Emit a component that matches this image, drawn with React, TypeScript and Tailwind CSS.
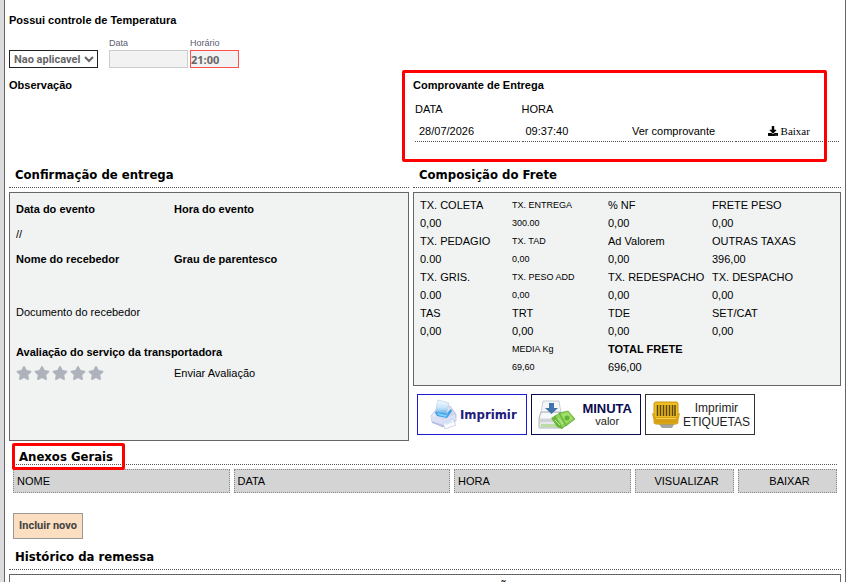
import { FaDownload, FaStar } from 'react-icons/fa';

const FREIGHT_ROWS = [
  ['TX. COLETA', 'TX. ENTREGA', '% NF', 'FRETE PESO'],
  ['0,00', '300.00', '0,00', '0,00'],
  ['TX. PEDAGIO', 'TX. TAD', 'Ad Valorem', 'OUTRAS TAXAS'],
  ['0.00', '0,00', '0,00', '396,00'],
  ['TX. GRIS.', 'TX. PESO ADD', 'TX. REDESPACHO', 'TX. DESPACHO'],
  ['0.00', '0,00', '0,00', '0,00'],
  ['TAS', 'TRT', 'TDE', 'SET/CAT'],
  ['0,00', '0,00', '0,00', '0,00'],
  ['', 'MEDIA Kg', 'TOTAL FRETE', ''],
  ['', '69,60', '696,00', ''],
];

function SectionTitle({ children }: { children: string }) {
  return (
    <h2 className="border-b border-dotted border-[#555] pb-px pl-1.5 font-['DejaVu_Sans_Condensed','DejaVu_Sans',sans-serif] text-[13px] leading-[22px] font-bold">
      {children}
    </h2>
  );
}

function PrinterIcon() {
  return (
    <svg viewBox="0 0 28 32" className="h-8 w-7">
      <defs>
        <linearGradient id="printer" x1="0" y1="0" x2="1" y2="1">
          <stop offset="0" stopColor="#fafbff" />
          <stop offset="1" stopColor="#b4bce0" />
        </linearGradient>
        <linearGradient id="paper" x1="0" y1="0" x2="0" y2="1">
          <stop offset="0" stopColor="#f8fbff" />
          <stop offset=".5" stopColor="#c5e4fa" />
          <stop offset="1" stopColor="#2f94df" />
        </linearGradient>
      </defs>
      <path d="M1 17l4-5 15-5 6 8v7l-13 6L2 23z" fill="url(#printer)" stroke="#a4acd2" strokeWidth=".6" />
      <path d="M8 1l11 3-3 12-8 1-3-3z" fill="url(#paper)" stroke="#b5c7e5" strokeWidth=".6" />
      <path d="M5 13l11 2 5-5 1 2-5 7-10-2z" fill="#3a9ce4" />
      <path d="M7 14l9 2 3-3-3 5-8-2z" fill="#86d2fa" />
      <path d="M1 17l12 4 12-6 1 7-13 5-11-4z" fill="#dce1f5" />
      <path d="M2 22l11 4 12-5v2l-12 5-11-4z" fill="#b8bfe2" />
      <path d="M13 24l10-4 3 6-11 4z" fill="#fbfcff" stroke="#b5bedf" strokeWidth=".6" />
      <path d="M14 24l7-3 2 2-7 3z" fill="#d5e5f8" />
    </svg>
  );
}

function MoneyPrinterIcon() {
  return (
    <svg viewBox="0 0 38 30" className="h-[30px] w-[38px]">
      <path d="M6 1h16l2 12H4z" fill="#f4f6f7" stroke="#c8ced2" />
      <path d="M4 12h19l3 6v9q0 1-1 1H3q-1 0-1-1v-9z" fill="#e6e9eb" stroke="#b0b6ba" />
      <path d="M5 13h17l3 5H3z" fill="#f8f9fa" />
      <path d="M3 19h22v3H3z" fill="#cfd3d6" />
      <path d="M4 24h18v3H4z" fill="#b9dca0" />
      <path d="M12 3h5v5h4l-6.500 6L8 8h4z" fill="#4373ad" />
      <path d="M14 18l5-3 9 11-3 3-5-2z" fill="#6bb93c" />
      <path d="M18 16l5-3 7 12-5 3z" fill="#8fd35a" stroke="#59a62f" strokeWidth=".6" />
      <path d="M22 13l9-2 7 8-9 7z" fill="#80ca48" stroke="#4e9b28" strokeWidth=".6" />
      <path d="M24 14l7-2 5 7-7 4z" fill="#a3de6c" />
      <circle cx="30" cy="18" r="2.500" fill="#62b333" />
      <path d="M18 20l5 5M21 18l5 6" stroke="#d2f2b4" strokeWidth=".8" />
    </svg>
  );
}

function BarcodePrinterIcon() {
  return (
    <svg viewBox="0 0 28 28" className="h-7 w-7">
      <path d="M6 22h17l-3 5H10z" fill="#a5a5a0" />
      <path d="M0 12l3 1v6l-2-2zM28 12l-3 1v6l2-2z" fill="#dca91c" />
      <rect x="2" y="1" width="24" height="22" rx="2" fill="#edbd22" stroke="#c8940e" />
      <path d="M3 16h22v5q0 1-1 1H4q-1 0-1-1z" fill="#d6a016" />
      <path d="M5.500 4v11M8.500 4v11M11.500 4v11M14.500 4v11M17.500 4v11M20.500 4v11M23 4v11" stroke="#5c4508" strokeWidth="1.500" />
      <path d="M4 17.500h20" stroke="#f6d452" />
    </svg>
  );
}

function DeliveryConfirmation() {
  return (
    <section className="flex flex-col">
      <SectionTitle>Confirmação de entrega</SectionTitle>
      <div className="mt-1 flex-1 border border-[#666] bg-[#f1f3f3] px-1.5 pt-2">
        <div className="grid grid-cols-[158px_1fr] leading-4">
          <b>Data do evento</b>
          <b>Hora do evento</b>
          <span className="col-span-2 mt-[9px]">//</span>
          <b className="mt-[9px]">Nome do recebedor</b>
          <b className="mt-[9px]">Grau de parentesco</b>
          <span className="col-span-2 mt-[37px]">Documento do recebedor</span>
          <b className="col-span-2 mt-6">Avaliação do serviço da transportadora</b>
          <div className="mt-1 flex gap-0.5 text-[#adb2bb]">
            {[1, 2, 3, 4, 5].map((n) => (
              <button key={n} type="button" aria-label={`${n} estrelas`}>
                <FaStar className="size-4" />
              </button>
            ))}
          </div>
          <button type="button" className="mt-[5px] justify-self-start leading-4">
            Enviar Avaliação
          </button>
        </div>
      </div>
    </section>
  );
}

function FreightBreakdown() {
  return (
    <section>
      <SectionTitle>Composição do Frete</SectionTitle>
      <div className="mt-1 border border-[#666] bg-[#f1f3f3] pt-[3px] pb-[9px] pl-1.5">
        <table className="w-full table-fixed">
          <colgroup>
            <col className="w-[92px]" />
            <col className="w-24" />
            <col className="w-[104px]" />
            <col />
          </colgroup>
          <tbody>
            {FREIGHT_ROWS.map((row, r) => (
              <tr key={r} className="h-[18px]">
                {row.map((cell, c) => (
                  <td
                    key={c}
                    className={
                      c === 1 && r !== 6 && r !== 7
                        ? 'p-0 text-[9px] leading-4 whitespace-nowrap'
                        : cell === 'TOTAL FRETE'
                          ? 'p-0 leading-4 font-bold'
                          : 'p-0 leading-4 whitespace-nowrap'
                    }
                  >
                    {cell}
                  </td>
                ))}
              </tr>
            ))}
          </tbody>
        </table>
      </div>
      <div className="mt-2 mb-1.5 flex gap-1 pl-1">
        <button type="button" className="flex h-[41px] w-[110px] items-center gap-0.5 border border-[#1c1cd8] pl-3 font-['DejaVu_Sans_Condensed','DejaVu_Sans',sans-serif] text-[13px] font-bold text-[#20207c]">
          <PrinterIcon />
          Imprimir
        </button>
        <button type="button" className="flex h-[41px] w-[110px] items-center justify-between border border-[#0a0a50] pr-2 pl-[5px]">
          <MoneyPrinterIcon />
          <span className="flex flex-col items-center text-[11px] leading-[13px] text-[#222]">
            <b className="text-[13px] text-[#0a0a50]">MINUTA</b>
            <span>valor</span>
          </span>
        </button>
        <button type="button" className="flex h-[41px] w-[110px] items-center justify-between border border-[#333] pr-1 pl-1.5 text-[12px] leading-[14px] text-[#222]">
          <BarcodePrinterIcon />
          <span>
            Imprimir
            <br />
            ETIQUETAS
          </span>
        </button>
      </div>
    </section>
  );
}

export default function App() {
  return (
    <div className="h-screen overflow-hidden bg-[#dcdcde] pl-1 font-['Liberation_Sans',Arial,sans-serif] text-[11px] text-black">
      <main className="min-h-full border-x border-[#666] bg-white px-1">
        <div className="pt-3 leading-4">
          <label htmlFor="temperatura" className="block font-bold">
            Possui controle de Temperatura
          </label>
          <div className="mt-2 flex h-8 items-end">
            <select
              id="temperatura"
              className="mr-[11px] h-[18px] w-[89px] border border-[#222] bg-white font-['Roboto',sans-serif] text-[11px] leading-4 font-bold text-[#666]"
            >
              <option>Nao aplicavel</option>
            </select>
            <label className="mr-0.5 flex w-[79px] flex-col text-[9px] leading-[14px] text-[#5c5c70]">
              Data
              <input type="text" disabled className="h-[18px] w-full border border-[#ccc] bg-[#f2f2f2]" />
            </label>
            <label className="flex w-[49px] flex-col text-[9px] leading-[14px] text-[#5c5c70]">
              Horário
              <input
                type="text"
                defaultValue="21:00"
                className="h-[18px] w-full border border-[#ff5050] bg-[#f2f2f2] font-['Noto_Sans',sans-serif] text-[11px] leading-4 font-bold text-[#666]"
              />
            </label>
          </div>
        </div>

        <div className="mt-[9px] grid grid-cols-[400fr_428fr] gap-x-1 pb-[22px] leading-4">
          <h3 className="font-bold">Observação</h3>
          <section className="relative">
            <h3 className="font-bold">Comprovante de Entrega</h3>
            <table className="mt-1.5 w-full table-fixed border-separate border-spacing-x-0.5 border-spacing-y-0 text-left">
              <thead>
                <tr className="h-5">
                  <th className="p-0 font-normal">DATA</th>
                  <th className="p-0 font-normal">HORA</th>
                  <th aria-label="Visualização" />
                  <th aria-label="Download" />
                </tr>
              </thead>
              <tbody>
                <tr className="h-[23px]">
                  <td className="border-b border-dotted border-[#555] px-1 pt-0.5">28/07/2026</td>
                  <td className="border-b border-dotted border-[#555] px-1 pt-0.5">09:37:40</td>
                  <td className="border-b border-dotted border-[#555] px-1 pt-0.5">
                    <a href="#comprovante">Ver comprovante</a>
                  </td>
                  <td className="border-b border-dotted border-[#555] px-1 pt-0.5">
                    <a href="#baixar" className="flex items-center justify-center gap-[3px] pl-1 font-['Liberation_Serif',serif]">
                      <FaDownload className="size-[10px]" />
                      Baixar
                    </a>
                  </td>
                </tr>
              </tbody>
            </table>
            <div className="pointer-events-none absolute -top-[7px] right-3.5 -left-[11px] h-[92px] rounded-xs border-3 border-[#ff0000]" />
          </section>
        </div>

        <div className="grid grid-cols-[400fr_428fr] gap-x-1">
          <DeliveryConfirmation />
          <FreightBreakdown />
        </div>

        <section className="px-1 pt-[3px]">
          <div className="relative pl-[3px]">
            <h2 className="h-[21px] border-b border-dotted border-[#555] pl-[3px] font-['DejaVu_Sans_Condensed','DejaVu_Sans',sans-serif] text-[13px] leading-[26px] font-bold">
              Anexos Gerais
            </h2>
            <div className="pointer-events-none absolute -top-px -left-px h-[27px] w-[113px] rounded-xs border-3 border-[#ff0000]" />
          </div>
          <div className="-mx-1">
            <table className="mt-1 w-full table-fixed border-separate border-spacing-x-1 border-spacing-y-0 text-left">
              <colgroup>
                <col />
                <col />
                <col className="w-[177px]" />
                <col className="w-[99px]" />
                <col className="w-[99px]" />
              </colgroup>
              <thead>
                <tr className="h-6">
                  <th className="border border-dotted border-[#888] bg-[#d4d4d4] px-[3px] font-normal">NOME</th>
                  <th className="border border-dotted border-[#888] bg-[#d4d4d4] px-[3px] font-normal">DATA</th>
                  <th className="border border-dotted border-[#888] bg-[#d4d4d4] px-[3px] font-normal">HORA</th>
                  <th className="border border-dotted border-[#888] bg-[#d4d4d4] pl-1 text-center font-normal">VISUALIZAR</th>
                  <th className="border border-dotted border-[#888] bg-[#d4d4d4] pl-1 text-center font-normal">BAIXAR</th>
                </tr>
              </thead>
            </table>
          </div>
          <button
            type="button"
            className="mt-5 h-[26px] w-[70px] border border-[#999] bg-[#fcdec0] font-['Roboto',sans-serif] font-bold text-[#444]"
          >
            Incluir novo
          </button>
        </section>

        <section className="mt-[7px]">
          <SectionTitle>Histórico da remessa</SectionTitle>
          <table className="mt-1 w-full border border-[#666]">
            <thead>
              <tr className="h-6">
                <th className="pl-[116px] font-bold">DESCRIÇÃO</th>
              </tr>
            </thead>
          </table>
        </section>
      </main>
    </div>
  );
}
